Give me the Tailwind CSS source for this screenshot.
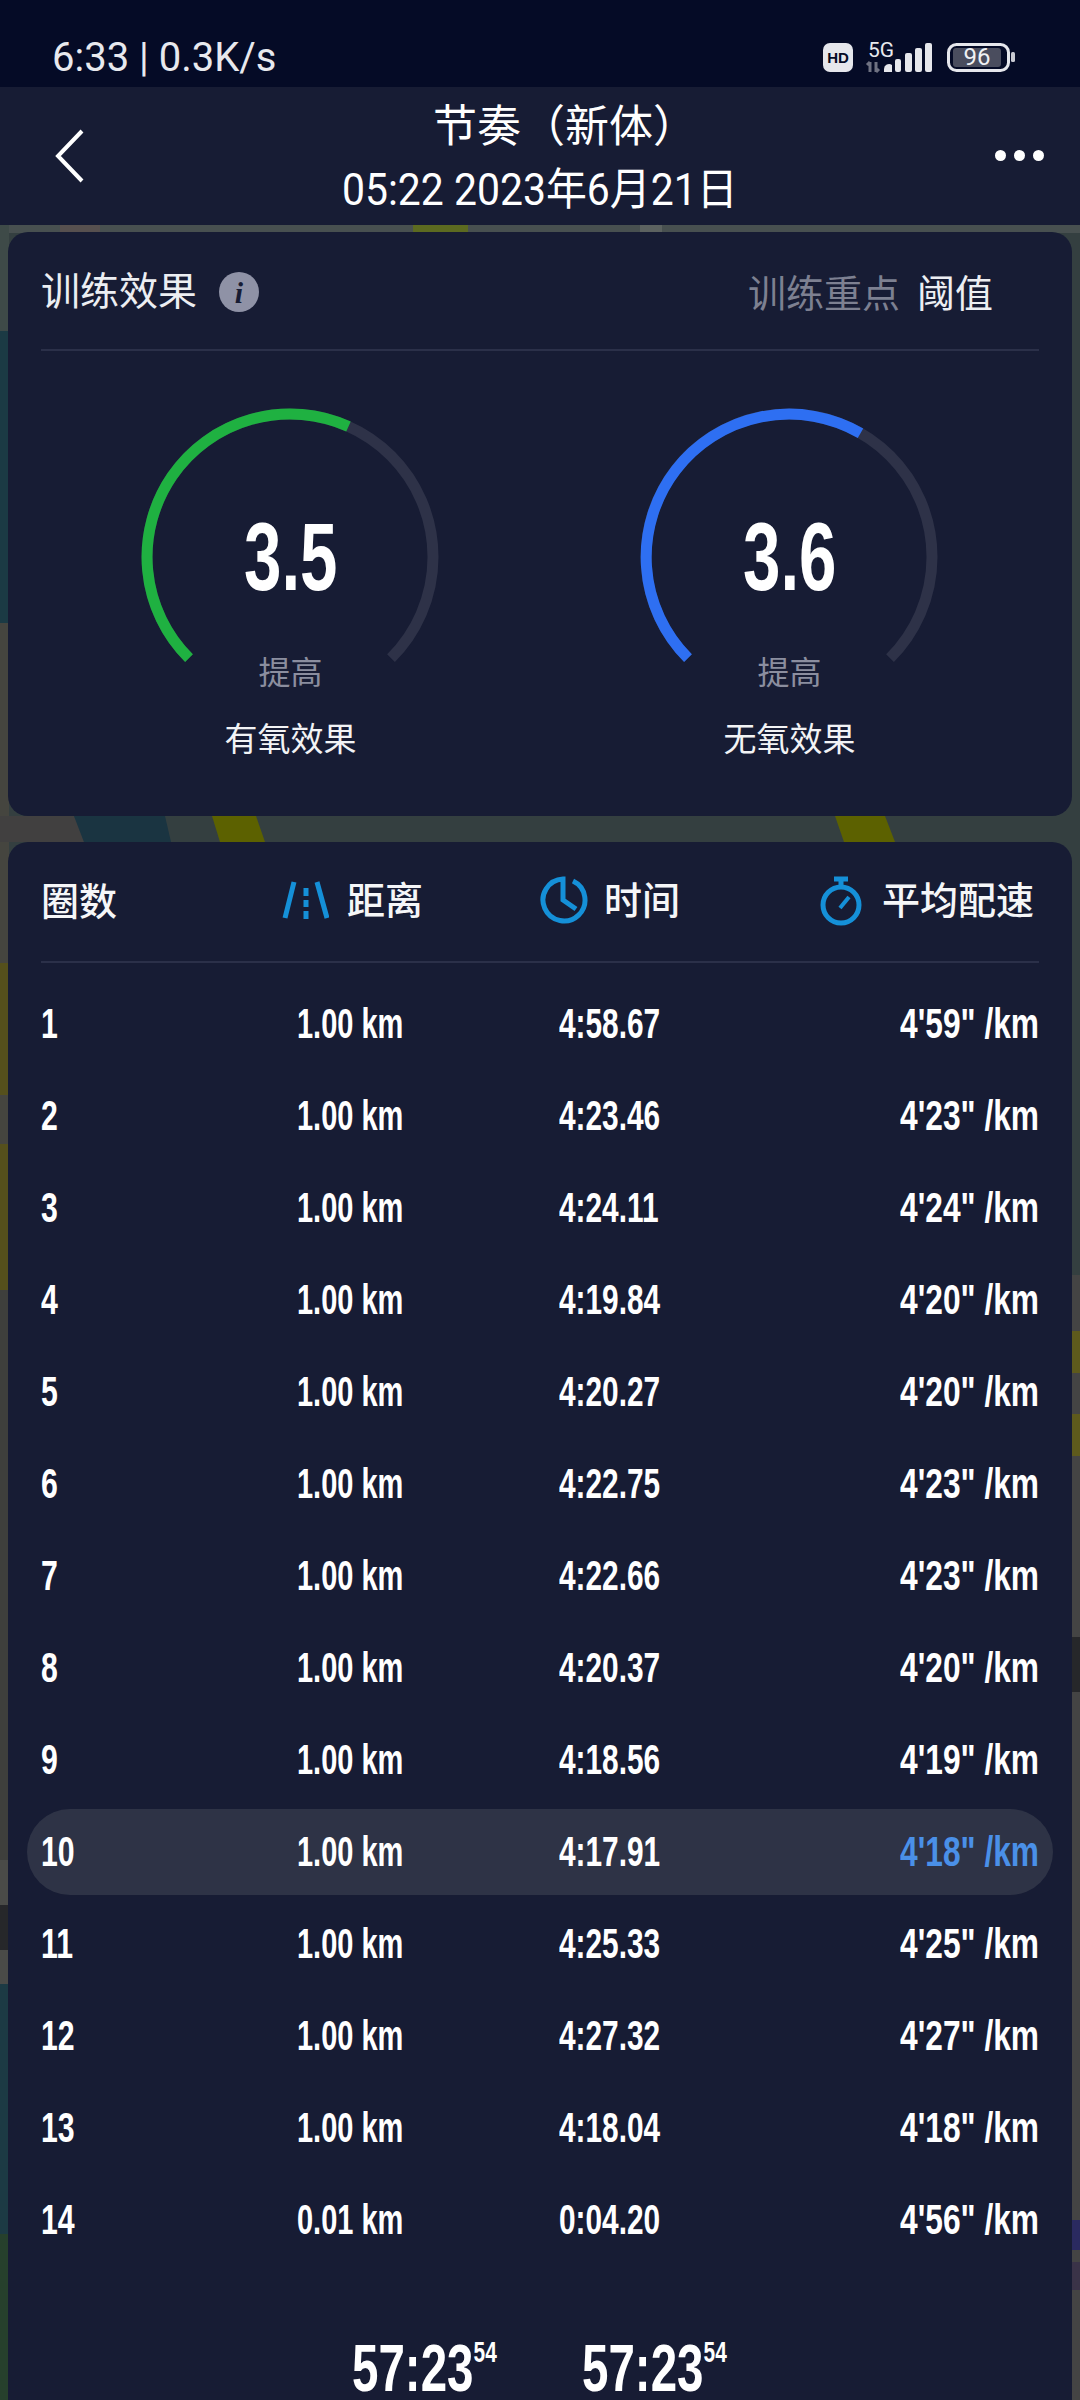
<!DOCTYPE html>
<html lang="zh">
  <head>
    <meta charset="UTF-8" />
    <meta name="viewport" content="width=device-width, initial-scale=1.0" />
    <title>节奏（新体）</title>
    <script src="https://cdn.jsdelivr.net/npm/@tailwindcss/browser@4"></script>
  </head>
  <body class="bg-[#343f40] font-['Roboto','Noto_Sans_CJK_SC',sans-serif] text-white">
    <div class="relative w-[1080px] h-[2400px] overflow-hidden">
      <!-- map behind the cards -->
      <svg class="absolute left-0 top-0" width="1080" height="2400" viewBox="0 0 1080 2400">
        <rect x="0" y="225" width="1080" height="8" fill="#485050" />
        <rect x="413" y="225" width="55" height="8" fill="#5c6a20" />
        <rect x="60" y="225" width="40" height="8" fill="#57504f" />
        <rect x="640" y="225" width="22" height="8" fill="#5c6260" />
        <rect x="0" y="225" width="9" height="106" fill="#3e4a48" />
        <rect x="0" y="331" width="9" height="292" fill="#1b3a44" />
        <path d="M0 623 H9 V963 H0 Z" fill="#45453f" />
        <path d="M0 816 H74 L84 842 H0 Z" fill="#414040" />
        <path d="M74 816 H165 L171 842 H84 Z" fill="#1a3441" />
        <path d="M212 816 H256 L265 842 H220 Z" fill="#5c6100" />
        <path d="M835 816 H885 L895 842 H844 Z" fill="#5c6100" />
        <rect x="0" y="963" width="9" height="132" fill="#55501c" />
        <rect x="0" y="1095" width="9" height="49" fill="#45453f" />
        <rect x="0" y="1144" width="9" height="146" fill="#55501c" />
        <rect x="0" y="1290" width="9" height="570" fill="#3e3f3c" />
        <rect x="0" y="1860" width="9" height="124" fill="#4a4b48" />
        <rect x="0" y="1905" width="9" height="45" fill="#26272a" />
        <rect x="0" y="1984" width="9" height="250" fill="#1c3a44" />
        <rect x="0" y="2234" width="9" height="166" fill="#26402c" />
        <rect x="1071" y="1275" width="9" height="1125" fill="#444444" />
        <rect x="1071" y="1331" width="9" height="42" fill="#5e5a1c" />
        <rect x="1071" y="1414" width="9" height="42" fill="#5e5a1c" />
        <rect x="1071" y="1637" width="9" height="55" fill="#26272a" />
        <rect x="1071" y="2220" width="9" height="30" fill="#2a2a60" />
        <rect x="1071" y="2262" width="9" height="28" fill="#3a3348" />
      </svg>

      <div class="relative flex flex-col">
        <!-- status bar -->
        <div class="relative h-[87px] bg-[#050b26] pl-[52px] pt-[38px]">
          <div class="text-[40px] leading-[40px] text-[#e8e9ee] whitespace-nowrap">6:33 | 0.3K/s</div>
          <svg class="absolute left-[820px] top-[38px]" width="200" height="40" viewBox="820 38 200 40">
            <rect x="823" y="43" width="30" height="29" rx="7" fill="#e6e7ec" />
            <text x="838" y="63" text-anchor="middle" font-family="Liberation Sans" font-weight="700" font-size="15" fill="#050b26">HD</text>
            <text x="868" y="57" font-family="Roboto" font-size="21" fill="#e8e9ee">5G</text>
            <path d="M870 62v10M867 65l3-3M876 62v10M879 69l-3 3" stroke="#6f7282" stroke-width="3" fill="none" />
            <path d="M884 72v-3a5 5 0 0 1 8-4v7z" fill="#e6e7ec" />
            <rect x="895" y="59" width="6" height="13" rx="2" fill="#e6e7ec" />
            <rect x="905" y="53" width="7" height="19" rx="2" fill="#e6e7ec" />
            <rect x="915" y="48" width="7" height="24" rx="2" fill="#e6e7ec" />
            <rect x="925" y="43" width="7" height="29" rx="2" fill="#e6e7ec" />
            <rect x="948.500" y="44.500" width="60" height="26" rx="8" fill="none" stroke="#e6e7ec" stroke-width="3" />
            <rect x="953" y="48" width="48" height="19" rx="3" fill="#4a4d5e" />
            <text x="977" y="65" text-anchor="middle" font-family="Roboto" font-size="24" fill="#f0f1f4">96</text>
            <rect x="1011" y="52" width="4" height="10" rx="1.500" fill="#c9cad2" />
          </svg>
        </div>

        <!-- header -->
        <div class="relative h-[138px] bg-[#171c34] flex flex-col items-center">
          <div class="mt-[18px] ml-[50px] h-[44px] text-[44px] leading-[44px] whitespace-nowrap">节奏（新体）</div>
          <div class="mt-[18px] text-[44px] leading-[46px] whitespace-nowrap scale-x-[0.93]">05:22 2023年6月21日</div>
          <svg class="absolute left-[54px] top-[42px]" width="32" height="54" viewBox="0 0 32 54"><path d="M28 2 L4 27 L28 52" stroke="#fff" stroke-width="4" fill="none" /></svg>
          <div class="absolute left-[995px] top-[63px] flex gap-[8px]">
            <div class="w-[11px] h-[11px] rounded-full bg-white"></div>
            <div class="w-[11px] h-[11px] rounded-full bg-white"></div>
            <div class="w-[11px] h-[11px] rounded-full bg-white"></div>
          </div>
        </div>

        <!-- training effect card -->
        <div class="relative mt-[7px] mx-[8px] h-[584px] rounded-[20px] bg-[#171c34] px-[33px]">
          <div class="h-[119px] border-b-2 border-[#2b3049] flex items-start justify-between">
            <div class="mt-[38px] flex items-center text-[39px] leading-[44px]">
              <span class="text-[#eceef2]">训练效果</span>
              <svg class="ml-[22px]" width="40" height="40" viewBox="0 0 40 40">
                <circle cx="20" cy="20" r="20" fill="#8f92a6" />
                <text x="20" y="31" text-anchor="middle" font-family="Liberation Serif" font-style="italic" font-weight="700" font-size="30" fill="#171c34">i</text>
              </svg>
            </div>
            <div class="mt-[40px] mr-[46px] flex text-[38px] leading-[44px]">
              <span class="text-[#7d8091]">训练重点</span>
              <span class="ml-[17px] text-[#eceef2]">阈值</span>
            </div>
          </div>
          <div class="flex">
            <div class="relative w-[499px] flex flex-col items-center">
              <svg class="absolute left-0 top-[3px]" width="499" height="340" viewBox="41 352 499 340">
                <path d="M189 656.200 A 143 143 0 1 1 391 656.200" stroke="#2e3248" stroke-width="11" fill="none" />
                <path d="M189 656.200 A 143 143 0 0 1 348.500 424.500" stroke="#1fb141" stroke-width="11" fill="none" />
              </svg>
              <div class="relative mt-[161px] h-[90px] text-[96px] leading-[90px] font-bold font-['Liberation_Sans',sans-serif] scale-x-[0.7]">3.5</div>
              <div class="relative mt-[51px] text-[32px] leading-[40px] text-[#8b8e9f]">提高</div>
              <div class="relative mt-[27px] text-[33px] leading-[40px] text-[#f2f3f5]">有氧效果</div>
            </div>
            <div class="relative w-[499px] flex flex-col items-center">
              <svg class="absolute left-0 top-[3px]" width="499" height="340" viewBox="41 352 499 340">
                <path d="M189 656.200 A 143 143 0 1 1 391 656.200" stroke="#2e3248" stroke-width="11" fill="none" />
                <path d="M189 656.200 A 143 143 0 0 1 361.500 431.200" stroke="#2e6ff2" stroke-width="11" fill="none" />
              </svg>
              <div class="relative mt-[161px] h-[90px] text-[96px] leading-[90px] font-bold font-['Liberation_Sans',sans-serif] scale-x-[0.7]">3.6</div>
              <div class="relative mt-[51px] text-[32px] leading-[40px] text-[#8b8e9f]">提高</div>
              <div class="relative mt-[27px] text-[33px] leading-[40px] text-[#f2f3f5]">无氧效果</div>
            </div>
          </div>
        </div>

        <!-- laps card -->
        <div class="relative mt-[26px] mx-[8px] h-[1558px] rounded-t-[20px] bg-[#171c34]">
          <div class="mx-[33px] h-[121px] border-b-2 border-[#2b3049] relative text-[38px] leading-[44px] font-medium text-[#f5f6f8]">
            <span class="absolute left-0 top-[38px]">圈数</span>
            <svg class="absolute left-[238px] top-[36px]" width="50" height="44" viewBox="0 0 50 44">
              <path d="M15 4 L6 40 M38 4 L48 40" stroke="#1590d8" stroke-width="5" fill="none" />
              <path d="M27 10v8M27 22v7M27 33v8" stroke="#1590d8" stroke-width="5" fill="none" />
            </svg>
            <span class="absolute left-[306px] top-[37px]">距离</span>
            <svg class="absolute left-[498px] top-[33px]" width="50" height="50" viewBox="0 0 50 50">
              <path d="M34 6 A 21 21 0 1 1 24 4 V25 L37 34" stroke="#1590d8" stroke-width="5" fill="none" />
            </svg>
            <span class="absolute left-[563px] top-[37px]">时间</span>
            <svg class="absolute left-[775px] top-[34px]" width="50" height="52" viewBox="0 0 50 52">
              <path d="M18 3h14M25 3v8" stroke="#1590d8" stroke-width="5" fill="none" />
              <circle cx="25" cy="29" r="18" stroke="#1590d8" stroke-width="5" fill="none" />
              <path d="M24 32 L33 21" stroke="#1590d8" stroke-width="4" fill="none" />
            </svg>
            <span class="absolute right-[5px] top-[37px]">平均配速</span>
          </div>
          <div id="rows" class="mt-[15px] flex flex-col font-bold font-['Liberation_Sans',sans-serif] text-[42px] leading-[48px]"></div>
          <div class="mt-[72px] ml-[344px] flex font-bold font-['Liberation_Sans',sans-serif]">
            <div class="w-[230px] flex items-start origin-left scale-x-[0.72]"><span class="text-[66px] leading-[60px]">57:23</span><span class="text-[29px] leading-[28px]">54</span></div>
            <div class="flex items-start origin-left scale-x-[0.72]"><span class="text-[66px] leading-[60px]">57:23</span><span class="text-[29px] leading-[28px]">54</span></div>
          </div>
        </div>
      </div>
    </div>

    <script>
      const laps = [
        ["1", "1.00 km", "4:58.67", "4'59\" /km"],
        ["2", "1.00 km", "4:23.46", "4'23\" /km"],
        ["3", "1.00 km", "4:24.11", "4'24\" /km"],
        ["4", "1.00 km", "4:19.84", "4'20\" /km"],
        ["5", "1.00 km", "4:20.27", "4'20\" /km"],
        ["6", "1.00 km", "4:22.75", "4'23\" /km"],
        ["7", "1.00 km", "4:22.66", "4'23\" /km"],
        ["8", "1.00 km", "4:20.37", "4'20\" /km"],
        ["9", "1.00 km", "4:18.56", "4'19\" /km"],
        ["10", "1.00 km", "4:17.91", "4'18\" /km"],
        ["11", "1.00 km", "4:25.33", "4'25\" /km"],
        ["12", "1.00 km", "4:27.32", "4'27\" /km"],
        ["13", "1.00 km", "4:18.04", "4'18\" /km"],
        ["14", "0.01 km", "0:04.20", "4'56\" /km"],
      ];

      document.getElementById("rows").innerHTML = laps
        .map(function (lap) {
          const best = lap[0] === "10";
          const rowClass = best
            ? "h-[86px] my-[3px] mx-[19px] px-[14px] flex items-center rounded-full bg-[#2e3346]"
            : "h-[92px] mx-[19px] px-[14px] flex items-center";
          const paceClass = best
            ? "ml-auto origin-right scale-x-[0.755] text-[#4a90e8]"
            : "ml-auto origin-right scale-x-[0.755]";
          return `<div class="${rowClass}">
            <span class="w-[256px] shrink-0"><span class="inline-block origin-left scale-x-[0.72]">${lap[0]}</span></span>
            <span class="w-[262px] shrink-0"><span class="inline-block origin-left scale-x-[0.69]">${lap[1]}</span></span>
            <span class="shrink-0"><span class="inline-block origin-left scale-x-[0.71]">${lap[2]}</span></span>
            <span class="${paceClass}">${lap[3]}</span>
          </div>`;
        })
        .join("");
    </script>
  </body>
</html>
